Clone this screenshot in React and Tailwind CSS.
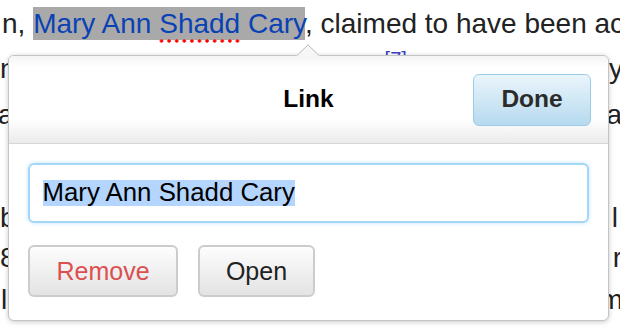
export default function App() {
  return (
    <div className="relative w-[620px] h-[330px] overflow-hidden bg-white font-['Liberation_Sans',Arial,sans-serif] text-[#222]">
      <div className="pt-[3.5px] text-[28px] leading-[40px] whitespace-nowrap">
        <div className="h-[45px] pl-[2px]">
          n,{' '}
          <span className="bg-[#a9a9a9] text-[#0a42b5] py-[1px]">
            Mary Ann{' '}
            <span className="pb-[4px] bg-[radial-gradient(circle,#f00_1.4px,transparent_1.9px)] bg-[length:7.6px_4px] bg-repeat-x bg-bottom">
              Shadd
            </span>{' '}
            Cary
          </span>
          , claimed to have been ac
        </div>
        <div className="h-[46px] flex">
          <span>n</span>
          <span className="self-start ml-[369px] text-[20px] leading-[20px] text-[#3b3fc4]">[7]</span>
          <span className="ml-auto mr-[-3px]">y</span>
        </div>
        <div className="h-[46px] flex">
          <span className="ml-[-2px]">a</span>
          <span className="ml-auto mr-[-2px]">na</span>
        </div>
        <div className="h-[57px]"></div>
        <div className="h-[40px] flex">
          <span>b</span>
          <span className="ml-auto mr-[2px]">l</span>
        </div>
        <div className="h-[42px] flex">
          <span>8</span>
          <span className="ml-auto mr-[-2px]">r</span>
        </div>
        <div className="h-[42px] flex">
          <span className="ml-[1px]">l</span>
          <span className="ml-auto mr-[-3px]">m</span>
        </div>
      </div>

      <div className="absolute left-[8px] top-[55px] w-[601px] h-[266px] rounded-[6px] border border-[#c4c4c4] bg-white shadow-[0_1px_5px_rgba(0,0,0,0.22)] flex flex-col">
        <svg className="absolute left-[287px] top-[-12px]" width="24" height="12" viewBox="0 0 24 12">
          <path d="M0 12 L12 0.6 L24 12 Z" fill="#f6f6f6" />
          <path d="M0.5 12 L12 0.9 L23.5 12" fill="none" stroke="#b8b8b8" strokeWidth="1" />
        </svg>
        <div className="h-[88px] grid grid-cols-[1fr_auto_1fr] items-center px-[17px] rounded-t-[5px] border-b border-[#d6d6d6] bg-[linear-gradient(#f5f5f5,#ffffff_14%,#ffffff_72%,#ebebeb)]">
          <div></div>
          <div className="text-[24.5px] font-bold text-black leading-none">Link</div>
          <div className="flex justify-end">
            <button className="w-[118px] h-[52px] rounded-[6px] border border-[#9ccbe5] bg-[linear-gradient(#eaf5fc,#b6daef)] text-[24.5px] font-bold text-[#2b2b2b] leading-none">
              Done
            </button>
          </div>
        </div>
        <div className="px-[19px] pt-[19px]">
          <div className="h-[60px] rounded-[6px] border-2 border-[#a3d6f7] shadow-[0_0_4px_#bfe3fb] flex items-center pl-[12.5px] text-[25.8px] text-black leading-none whitespace-nowrap">
            <span className="bg-[#b4d5fe]">Mary Ann Shadd Cary</span>
          </div>
          <div className="mt-[22px] flex gap-[20px]">
            <button className="w-[150px] h-[52px] rounded-[6px] border-2 border-[#cccccc] bg-[linear-gradient(#fdfdfd,#e3e3e3)] text-[25px] text-[#dc4f4f] leading-none">
              Remove
            </button>
            <button className="w-[117px] h-[52px] rounded-[6px] border-2 border-[#cccccc] bg-[linear-gradient(#fdfdfd,#e3e3e3)] text-[25px] text-[#222] leading-none">
              Open
            </button>
          </div>
        </div>
      </div>
    </div>
  );
}
